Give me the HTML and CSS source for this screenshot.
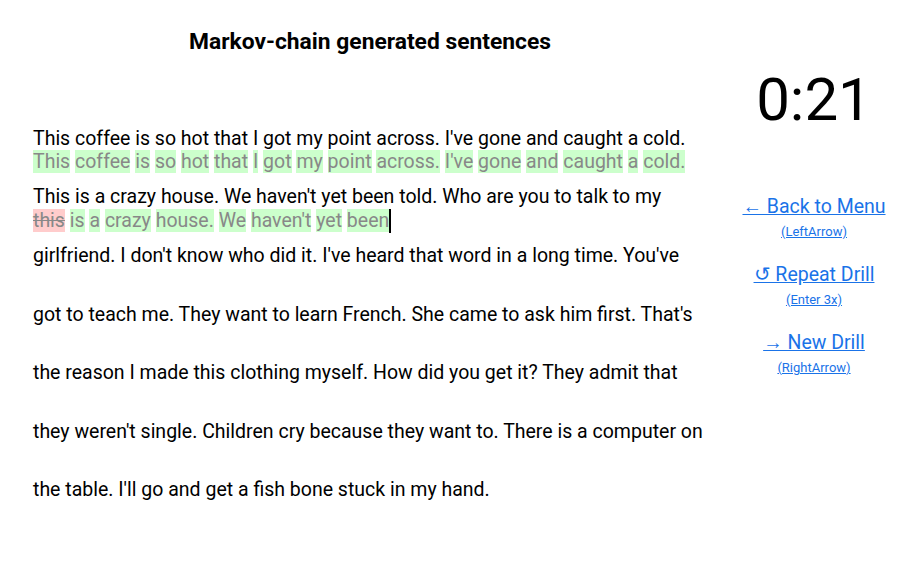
FILE: index.html
```html
<!DOCTYPE html>
<html>
<head>
<meta charset="utf-8">
<link rel="stylesheet" href="styles.css">
</head>
<body>
<div class="page">
  <main class="main">
    <h1 class="title">Markov-chain generated sentences</h1>
    <div class="text">
      <div class="row">
        <div class="orig">This coffee is so hot that I got my point across. I've gone and caught a cold.</div>
        <div class="typed"><span class="ok">This</span> <span class="ok">coffee</span> <span class="ok">is</span> <span class="ok">so</span> <span class="ok">hot</span> <span class="ok">that</span> <span class="ok">I</span> <span class="ok">got</span> <span class="ok">my</span> <span class="ok">point</span> <span class="ok">across.</span> <span class="ok">I've</span> <span class="ok">gone</span> <span class="ok">and</span> <span class="ok">caught</span> <span class="ok">a</span> <span class="ok">cold.</span></div>
      </div>
      <div class="row">
        <div class="orig">This is a crazy house. We haven't yet been told. Who are you to talk to my</div>
        <div class="typed"><span class="bad">this</span> <span class="ok">is</span> <span class="ok">a</span> <span class="ok">crazy</span> <span class="ok">house.</span> <span class="ok">We</span> <span class="ok">haven't</span> <span class="ok">yet</span> <span class="ok">been</span><span class="cursor"></span></div>
      </div>
      <div class="row">
        <div class="orig">girlfriend. I don't know who did it. I've heard that word in a long time. You've</div>
        <div class="typed"></div>
      </div>
      <div class="row">
        <div class="orig">got to teach me. They want to learn French. She came to ask him first. That's</div>
        <div class="typed"></div>
      </div>
      <div class="row">
        <div class="orig">the reason I made this clothing myself. How did you get it? They admit that</div>
        <div class="typed"></div>
      </div>
      <div class="row">
        <div class="orig">they weren't single. Children cry because they want to. There is a computer on</div>
        <div class="typed"></div>
      </div>
      <div class="row">
        <div class="orig">the table. I'll go and get a fish bone stuck in my hand.</div>
        <div class="typed"></div>
      </div>
    </div>
  </main>
  <aside class="side">
    <div class="timer">0:21</div>
    <nav class="actions">
      <div class="action">
        <a class="link" href="#">← Back to Menu</a>
        <a class="hint" href="#">(LeftArrow)</a>
      </div>
      <div class="action">
        <a class="link" href="#">↺ Repeat Drill</a>
        <a class="hint" href="#">(Enter 3x)</a>
      </div>
      <div class="action">
        <a class="link" href="#">→ New Drill</a>
        <a class="hint" href="#">(RightArrow)</a>
      </div>
    </nav>
  </aside>
</div>
</body>
</html>
```
FILE: styles.css
```css
html, body {
  margin: 0;
  padding: 0;
  background: #fff;
}
body {
  font-family: Roboto, "Noto Sans", sans-serif;
  color: #000;
}
.page {
  display: flex;
  gap: 15px;
}
.main {
  width: 674px;
  padding: 29px 0 0 33px;
  box-sizing: content-box;
}
.title {
  margin: 0 0 71.5px;
  font-size: 22.8px;
  font-weight: 700;
  text-align: center;
  line-height: 26px;
}
.text {
  font-size: 19.5px;
  line-height: 23.5px;
}
.row {
  margin-bottom: 11.5px;
}
.orig {
  white-space: nowrap;
}
.typed {
  min-height: 23.5px;
  color: #888;
  white-space: nowrap;
}
.ok {
  background: #ccffcc;
}
.bad {
  background: #ffcccc;
  text-decoration: line-through;
}
.cursor {
  display: inline-block;
  width: 0;
  height: 24px;
  border-left: 2px solid #000;
  vertical-align: top;
}
.side {
  flex: 1;
  display: flex;
  flex-direction: column;
  align-items: center;
  padding-top: 65px;
}
.timer {
  font-size: 60px;
  line-height: 70px;
  margin-bottom: 60px;
}
.actions {
  display: flex;
  flex-direction: column;
  align-items: center;
  gap: 24px;
}
.action {
  display: flex;
  flex-direction: column;
  align-items: center;
  gap: 5.5px;
}
.link {
  color: #1a73e8;
  font-size: 19.5px;
  line-height: 23.5px;
}
.hint {
  color: #1a73e8;
  font-size: 13px;
  line-height: 15px;
}
```
